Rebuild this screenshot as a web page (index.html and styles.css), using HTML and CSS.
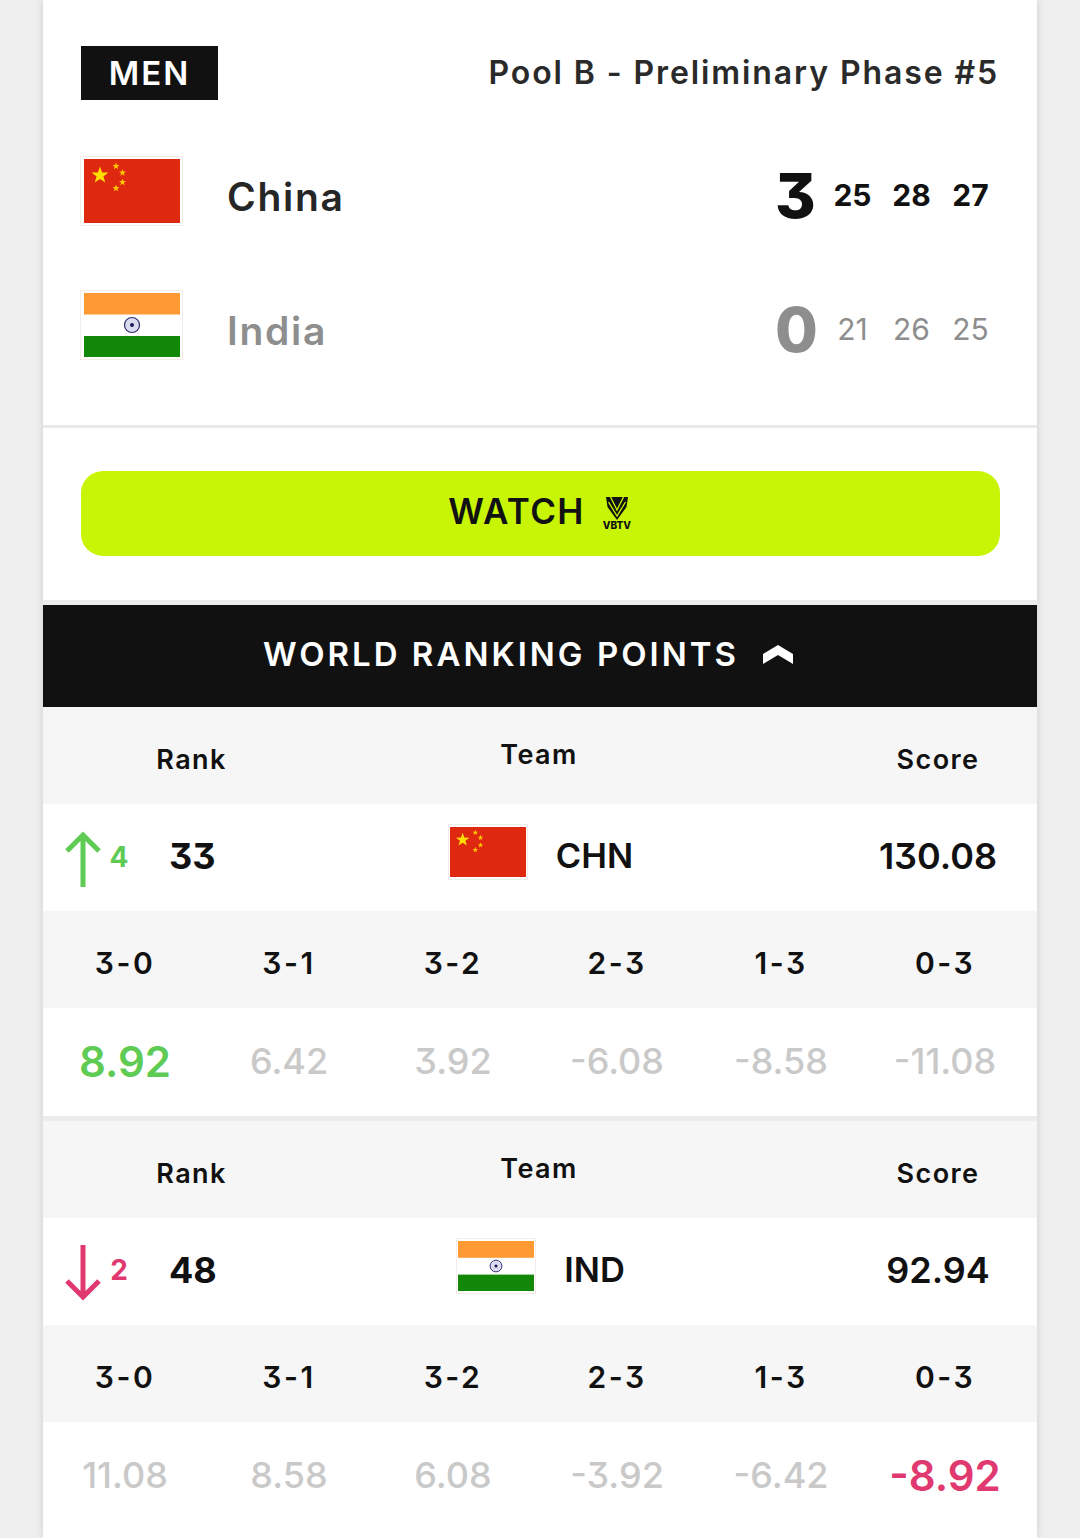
FILE: index.html
```html
<!DOCTYPE html>
<html lang="en">

<head>
    <meta charset="UTF-8">
    <meta name="viewport" content="width=device-width, initial-scale=1.0">
    <title>Pool B - Preliminary Phase #5</title>
    <link rel="stylesheet" href="styles.css">
</head>

<body>
    <svg class="defs" width="0" height="0">
        <symbol id="flag-chn" viewBox="0 0 96 64" preserveAspectRatio="none">
            <rect width="96" height="64" fill="#de2910" />
            <polygon fill="#ffde00" points="16,7.500 18.100,13.500 24.500,13.600 19.400,17.500 21.300,23.600 16,20 10.700,23.600 12.600,17.500 7.500,13.600 13.900,13.500" />
            <polygon fill="#ffc800" points="32,3.500 32.900,6 35.500,6.100 33.400,7.700 34.200,10.200 32,8.700 29.800,10.200 30.600,7.700 28.500,6.100 31.100,6" />
            <polygon fill="#ffc800" points="38.500,10 39.400,12.500 42,12.600 39.900,14.200 40.700,16.700 38.500,15.200 36.300,16.700 37.100,14.200 35,12.600 37.600,12.500" />
            <polygon fill="#ffc800" points="38.500,19.500 39.400,22 42,22.100 39.900,23.700 40.700,26.200 38.500,24.700 36.300,26.200 37.100,23.700 35,22.100 37.600,22" />
            <polygon fill="#ffc800" points="32,25.500 32.900,28 35.500,28.100 33.400,29.700 34.200,32.200 32,30.700 29.800,32.200 30.600,29.700 28.500,28.100 31.100,28" />
        </symbol>
        <symbol id="flag-ind" viewBox="0 0 96 64" preserveAspectRatio="none">
            <rect width="96" height="64" fill="#fff" />
            <rect width="96" height="21.500" fill="#ff9933" />
            <rect y="43" width="96" height="21" fill="#138808" />
            <circle cx="48" cy="32" r="7.500" fill="#dcdcf0" stroke="#2a2a6a" stroke-width="1.200" />
            <circle cx="48" cy="32" r="2" fill="#1a1a5a" />
        </symbol>
    </svg>

    <main class="card">
        <section class="match">
            <div class="match-head">
                <span class="chip">MEN</span>
                <span class="phase">Pool B - Preliminary Phase #5</span>
            </div>

            <div class="team">
                <svg class="flag flag-big"><use href="#flag-chn" /></svg>
                <span class="team-name">China</span>
                <div class="sets">
                    <span class="sets-total">3</span>
                    <span class="set">25</span>
                    <span class="set">28</span>
                    <span class="set">27</span>
                </div>
            </div>

            <div class="team team-lost">
                <svg class="flag flag-big"><use href="#flag-ind" /></svg>
                <span class="team-name">India</span>
                <div class="sets">
                    <span class="sets-total">0</span>
                    <span class="set">21</span>
                    <span class="set">26</span>
                    <span class="set">25</span>
                </div>
            </div>
        </section>

        <section class="watch">
            <a class="watch-btn" href="#watch">
                <span class="watch-label">WATCH</span>
                <span class="vbtv">
                    <svg class="vbtv-mark" viewBox="0 0 24 23">
                        <path d="M1 0h22l-1.500 10L12 23 2.500 10z" fill="#111" />
                        <path d="M5.500 0l6.500 13L18.500 0M3.500 5L12 19l8.500-14" fill="none" stroke="#c8f505" stroke-width="1.300" />
                    </svg>
                    <span class="vbtv-text">VBTV</span>
                </span>
            </a>
        </section>

        <a class="points-bar" href="#points">
            <span>WORLD RANKING POINTS</span>
            <svg class="chevron" viewBox="0 0 30 19"><polygon points="0,9 15,0 30,9 30,19 15,10 0,19" fill="#fff" /></svg>
        </a>

        <section class="points">
            <div class="summary summary-head">
                <span class="col-rank">Rank</span>
                <span class="col-team col-team-head">Team</span>
                <span class="col-score">Score</span>
            </div>
            <div class="summary summary-row">
                <div class="col-rank rank-cell">
                    <svg class="arrow arrow-up" viewBox="0 0 38 56">
                        <path d="M19 56V4M3 20L19 4l16 16" fill="none" stroke="currentColor" stroke-width="5" />
                    </svg>
                    <span class="rank-change up">4</span>
                    <span class="rank-value">33</span>
                </div>
                <div class="col-team team-cell">
                    <svg class="flag flag-small"><use href="#flag-chn" /></svg>
                    <span class="team-code">CHN</span>
                </div>
                <span class="col-score score-value">130.08</span>
            </div>
            <div class="results results-head">
                <span>3-0</span><span>3-1</span><span>3-2</span><span>2-3</span><span>1-3</span><span>0-3</span>
            </div>
            <div class="results results-row">
                <span class="hit-up">8.92</span><span>6.42</span><span>3.92</span><span>-6.08</span><span>-8.58</span><span>-11.08</span>
            </div>
        </section>

        <section class="points points-next">
            <div class="summary summary-head">
                <span class="col-rank">Rank</span>
                <span class="col-team col-team-head">Team</span>
                <span class="col-score">Score</span>
            </div>
            <div class="summary summary-row">
                <div class="col-rank rank-cell">
                    <svg class="arrow arrow-down" viewBox="0 0 38 56">
                        <path d="M19 0v52M3 36l16 16 16-16" fill="none" stroke="currentColor" stroke-width="5" />
                    </svg>
                    <span class="rank-change down">2</span>
                    <span class="rank-value">48</span>
                </div>
                <div class="col-team team-cell">
                    <svg class="flag flag-small"><use href="#flag-ind" /></svg>
                    <span class="team-code">IND</span>
                </div>
                <span class="col-score score-value">92.94</span>
            </div>
            <div class="results results-head">
                <span>3-0</span><span>3-1</span><span>3-2</span><span>2-3</span><span>1-3</span><span>0-3</span>
            </div>
            <div class="results results-row">
                <span>11.08</span><span>8.58</span><span>6.08</span><span>-3.92</span><span>-6.42</span><span class="hit-down">-8.92</span>
            </div>
        </section>
    </main>
</body>

</html>
```

FILE: styles.css
```css
html,
body {
    height: 100%;
    overflow: hidden;
}

body {
    font-family: Inter, "Liberation Sans", sans-serif;
    font-feature-settings: "cv09";
    margin: 0;
    padding: 0 43px;
    background: #efefef;
    color: #111;
}

a {
    color: inherit;
    text-decoration: none;
}

.defs {
    display: block;
    height: 0;
}

.card {
    background: #fff;
    box-shadow: 0 0 8px rgba(0, 0, 0, 0.14);
}

/* match */

.match {
    padding: 46px 38px 33px 38px;
    border-bottom: 3px solid #e9e9e9;
}

.match-head {
    display: flex;
    justify-content: space-between;
    align-items: center;
    height: 54px;
    margin-bottom: 24px;
}

.chip {
    background: #111;
    color: #fff;
    width: 137px;
    height: 54px;
    line-height: 54px;
    text-align: center;
    font-size: 33px;
    font-weight: 600;
    letter-spacing: 2px;
}

.phase {
    font-size: 32px;
    font-weight: 600;
    letter-spacing: 1.9px;
    color: #2a2a2a;
    padding-bottom: 2px;
}

.team {
    display: flex;
    align-items: center;
    height: 134px;
}

.flag {
    display: block;
    box-sizing: border-box;
    flex: none;
    background: #fff;
}

.flag-big {
    width: 101px;
    height: 68px;
    padding: 2px 2px 2px 3px;
    box-shadow: 0 0 0 1px #f4ece8;
    margin-right: 45px;
}

.team-name {
    font-size: 39px;
    font-weight: 600;
    letter-spacing: 1.7px;
    color: #262626;
    padding-top: 11px;
}

.sets {
    display: flex;
    align-items: center;
    margin-left: auto;
    margin-right: -1px;
}

.sets-total {
    width: 40px;
    margin-right: 8px;
    text-align: center;
    font-size: 62px;
    font-weight: 800;
    padding-top: 8px;
}

.set {
    width: 59px;
    text-align: center;
    font-size: 30px;
    font-weight: 700;
    padding-top: 7px;
}

.team-lost .team-name,
.team-lost .sets-total {
    color: #8e8e8e;
}

.team-lost .set {
    color: #8e8e8e;
    font-weight: 400;
}

/* watch */

.watch {
    padding: 43px 37px 44px 38px;
}

.watch-btn {
    display: flex;
    justify-content: center;
    align-items: center;
    gap: 16px;
    height: 85px;
    border-radius: 22px;
    background: #c8f505;
    font-size: 35px;
    font-weight: 600;
    letter-spacing: 1.4px;
}

.watch-label {
    padding-bottom: 6px;
}

.vbtv {
    display: flex;
    flex-direction: column;
    align-items: center;
    width: 32px;
}

.vbtv-mark {
    width: 24px;
    height: 23px;
}

.vbtv-text {
    font-size: 10px;
    font-weight: 800;
    line-height: 10px;
    letter-spacing: 0;
}

/* world ranking points */

.points-bar {
    display: flex;
    justify-content: center;
    align-items: center;
    gap: 24px;
    box-sizing: border-box;
    height: 107px;
    padding-right: 24px;
    padding-bottom: 4px;
    background: #111;
    color: #fff;
    border-top: 5px solid #ececec;
    font-size: 33px;
    font-weight: 600;
    letter-spacing: 3px;
}

.chevron {
    width: 30px;
    height: 19px;
}

.points-next {
    border-top: 5px solid #ececec;
}

.summary {
    display: grid;
    grid-template-columns: 296px 400px 1fr;
    align-items: center;
    text-align: center;
}

.summary-head {
    box-sizing: border-box;
    height: 97px;
    padding-top: 8px;
    background: #f6f6f6;
    font-size: 27px;
    font-weight: 600;
    letter-spacing: 1.4px;
}

.col-rank {
    padding-left: 1px;
}

.col-team-head {
    padding-bottom: 10px;
}

.col-score {
    padding-left: 100px;
}

.summary-row {
    box-sizing: border-box;
    height: 107px;
    padding-bottom: 4px;
    font-size: 36px;
    font-weight: 600;
}

.rank-cell {
    display: flex;
    align-items: center;
    padding-left: 21px;
}

.arrow {
    width: 38px;
    height: 56px;
    flex: none;
    margin-top: 6px;
}

.arrow-up {
    color: #5ecb55;
}

.arrow-down {
    color: #e0396f;
}

.rank-change {
    width: 20px;
    margin-left: 7px;
    font-size: 28px;
    font-weight: 700;
}

.rank-change.up {
    color: #5ecb55;
    padding-top: 2px;
}

.rank-change.down {
    color: #e0396f;
}

.rank-value {
    margin-left: 40px;
    font-weight: 700;
}

.team-cell {
    display: flex;
    justify-content: center;
    align-items: center;
    gap: 29px;
    padding-left: 4px;
}

.team-code {
    font-size: 34.500px;
}

.flag-small {
    width: 78px;
    height: 54px;
    padding: 2px 1px;
    box-shadow: 0 0 0 1px #f2ecea;
    margin-bottom: 8px;
}

.results {
    display: grid;
    grid-template-columns: repeat(6, 164px);
    align-items: center;
    justify-items: center;
}

.results-head {
    box-sizing: border-box;
    height: 97px;
    padding-top: 6px;
    background: #f6f6f6;
    font-size: 30px;
    font-weight: 600;
    letter-spacing: 2.500px;
}

.results-row {
    height: 106px;
    padding-bottom: 2px;
    font-size: 36px;
    font-weight: 500;
    color: #c9c9c9;
}

.points-next .results-row {
    padding-bottom: 10px;
}

.hit-up {
    color: #5ecb55;
    font-size: 42px;
    font-weight: 600;
}

.hit-down {
    color: #e0396f;
    font-size: 42px;
    font-weight: 600;
}
```
